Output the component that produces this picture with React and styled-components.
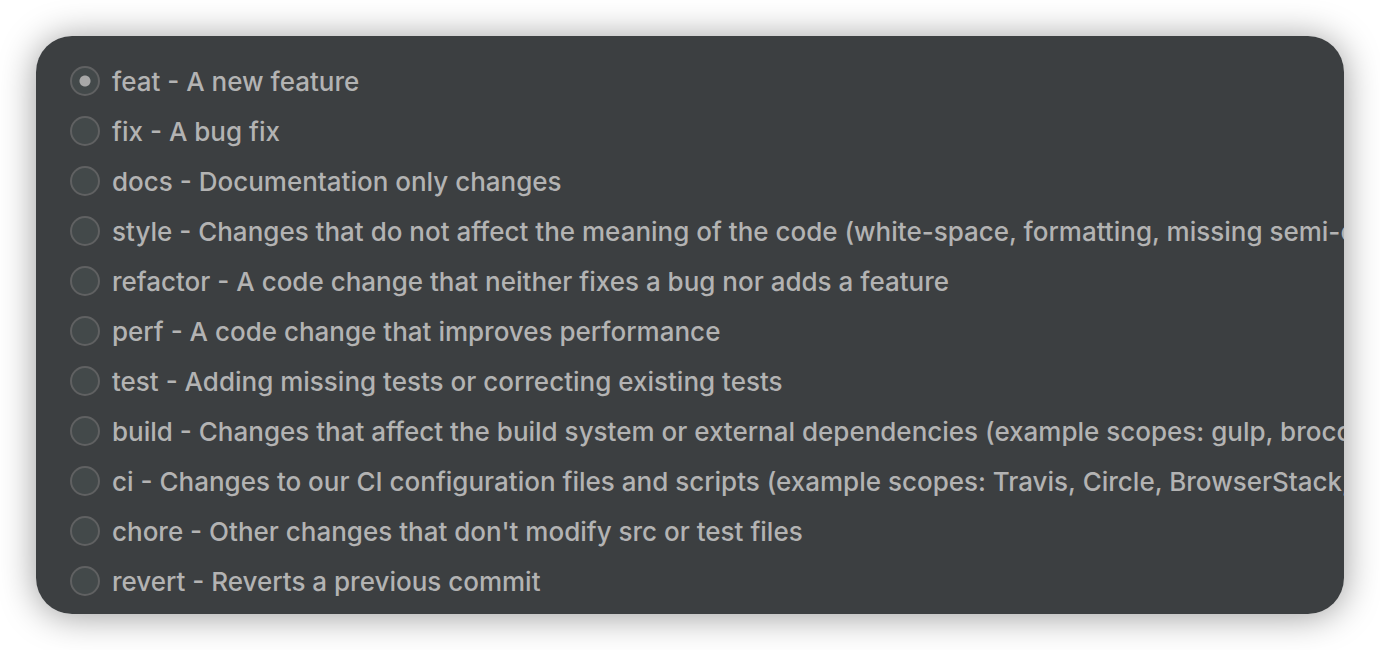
import React, { useState } from "react";
import styled, { createGlobalStyle } from "styled-components";

const GlobalStyle = createGlobalStyle`
  *, *::before, *::after { box-sizing: border-box; }
  body { margin: 0; background: #ffffff; font-family: Inter, "Liberation Sans", sans-serif; }
`;

const Page = styled.main`
  padding: 36px;
`;

const Panel = styled.fieldset`
  margin: 0;
  min-width: 0;
  border: 0;
  padding: 20px 0 8px 34px;
  border-radius: 36px;
  background: #3c3f41;
  box-shadow: 0 2px 36px rgba(0, 0, 0, 0.4);
  overflow: hidden;
`;

const Option = styled.label`
  display: flex;
  align-items: center;
  gap: 12px;
  height: 50px;
  color: #b3b3b3;
  font-size: 26px;
  font-weight: 500;
  line-height: 33px;
  white-space: nowrap;
`;

const Radio = styled.input`
  appearance: none;
  flex: none;
  width: 30px;
  height: 30px;
  margin: 0;
  border: 2px solid #606162;
  border-radius: 50%;
  background: #43494a;

  &:checked {
    background: radial-gradient(circle, #a8a8a8 5px, #43494a 6px);
  }
`;

const commitTypes = [
  ["feat", "A new feature"],
  ["fix", "A bug fix"],
  ["docs", "Documentation only changes"],
  ["style", "Changes that do not affect the meaning of the code (white-space, formatting, missing semi-colons, etc)"],
  ["refactor", "A code change that neither fixes a bug nor adds a feature"],
  ["perf", "A code change that improves performance"],
  ["test", "Adding missing tests or correcting existing tests"],
  ["build", "Changes that affect the build system or external dependencies (example scopes: gulp, broccoli, npm)"],
  ["ci", "Changes to our CI configuration files and scripts (example scopes: Travis, Circle, BrowserStack, SauceLabs)"],
  ["chore", "Other changes that don't modify src or test files"],
  ["revert", "Reverts a previous commit"],
];

export default function App() {
  const [selected, setSelected] = useState("feat");
  return (
    <Page>
      <GlobalStyle />
      <Panel aria-label="Commit type">
        {commitTypes.map(([type, description]) => (
          <Option key={type}>
            <Radio
              type="radio"
              name="commit-type"
              value={type}
              checked={selected === type}
              onChange={() => setSelected(type)}
            />
            <span>{type} - {description}</span>
          </Option>
        ))}
      </Panel>
    </Page>
  );
}
